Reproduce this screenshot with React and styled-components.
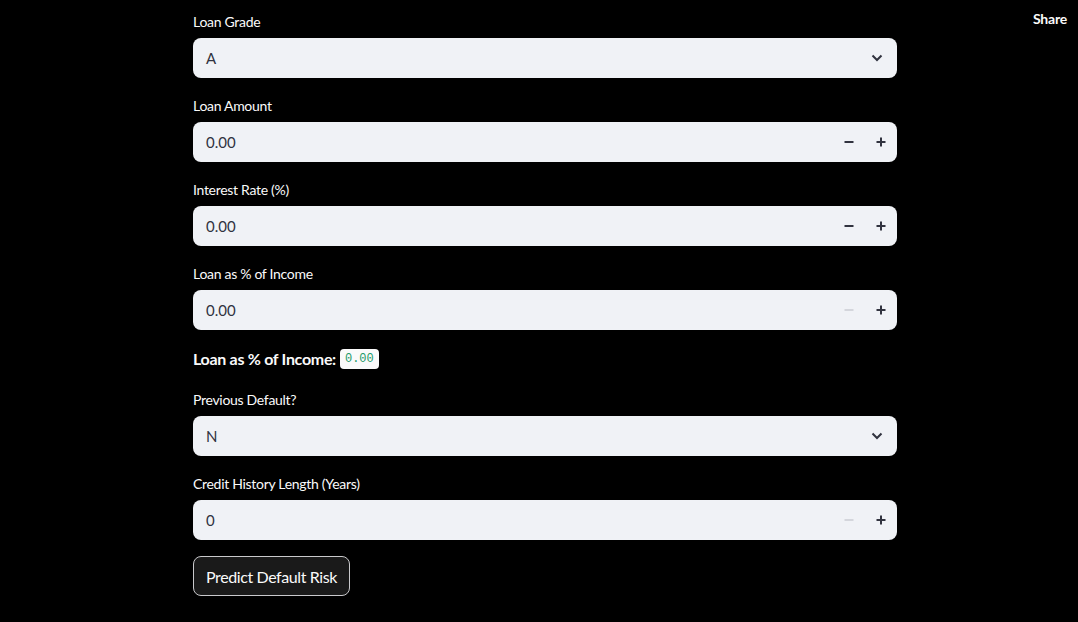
import React from 'react';
import styled, { createGlobalStyle } from 'styled-components';

const GlobalStyle = createGlobalStyle`
  html, body {
    margin: 0;
    padding: 0;
    background: #000;
    font-family: Lato, "Noto Sans", sans-serif;
  }
`;

const Page = styled.div`
  position: relative;
  min-height: 622px;
  background: #000;
  color: #fafafa;
`;

const Header = styled.header`
  position: absolute;
  top: 0;
  right: 0;
  padding: 8px 11px;
`;

const ShareLink = styled.span`
  font-size: 14px;
  font-weight: 700;
  letter-spacing: -0.2px;
  color: #fafafa;
`;

const Main = styled.main`
  width: 704px;
  margin: 0 auto;
  padding: 10px 0 0 12px;
  display: flex;
  flex-direction: column;
  gap: 16px;
`;

const Field = styled.div`
  display: flex;
  flex-direction: column;
`;

const Label = styled.label`
  font-size: 14px;
  line-height: 24px;
  letter-spacing: -0.3px;
  margin-bottom: 4px;
  color: #fafafa;
`;

const Box = styled.div`
  display: flex;
  align-items: center;
  height: 40px;
  background: #f0f2f6;
  border-radius: 8px;
  color: #31333f;
  font-size: 15px;
`;

const Value = styled.span`
  flex: 1;
  padding-left: 13px;
`;

const StepButton = styled.span`
  width: 32px;
  height: 40px;
  display: flex;
  align-items: center;
  justify-content: center;
  color: ${p => (p.disabled ? '#d4d6dc' : '#31333f')};
`;

const Chevron = styled.span`
  width: 40px;
  display: flex;
  align-items: center;
  justify-content: center;
  color: #31333f;
`;

const Markdown = styled.p`
  margin: 0;
  height: 26px;
  font-size: 16px;
  line-height: 24px;
  font-weight: 700;
  letter-spacing: -0.3px;
  display: flex;
  align-items: center;
  gap: 4px;
`;

const Code = styled.code`
  font-family: "Liberation Mono", "DejaVu Sans Mono", monospace;
  font-weight: 400;
  font-size: 12px;
  line-height: 20px;
  letter-spacing: 0;
  padding: 0 5px;
  border-radius: 4px;
  background: #fafafa;
  color: #1f9a6a;
`;

const Button = styled.button`
  align-self: flex-start;
  height: 40px;
  padding: 0 12px;
  background: #1a1a1a;
  border: 1px solid #c9c9cc;
  border-radius: 8px;
  color: #fafafa;
  font-family: inherit;
  font-size: 16px;
  letter-spacing: -0.4px;
`;

const Minus = () => (
  <svg width="10" height="10" viewBox="0 0 10 10">
    <path d="M0.5 5h9" stroke="currentColor" strokeWidth="2" />
  </svg>
);

const Plus = () => (
  <svg width="10" height="10" viewBox="0 0 10 10">
    <path d="M0.5 5h9M5 0.5v9" stroke="currentColor" strokeWidth="2" />
  </svg>
);

const Down = () => (
  <svg width="12" height="8" viewBox="0 0 12 8">
    <path d="M1.5 1.5L6 6l4.5-4.5" stroke="currentColor" strokeWidth="2" fill="none" />
  </svg>
);

const SelectField = ({ label, value }) => (
  <Field>
    <Label>{label}</Label>
    <Box>
      <Value>{value}</Value>
      <Chevron><Down /></Chevron>
    </Box>
  </Field>
);

const NumberField = ({ label, value, minDisabled }) => (
  <Field>
    <Label>{label}</Label>
    <Box>
      <Value>{value}</Value>
      <StepButton disabled={minDisabled}><Minus /></StepButton>
      <StepButton><Plus /></StepButton>
    </Box>
  </Field>
);

export default function App() {
  return (
    <Page>
      <GlobalStyle />
      <Header>
        <ShareLink>Share</ShareLink>
      </Header>
      <Main>
        <SelectField label="Loan Grade" value="A" />
        <NumberField label="Loan Amount" value="0.00" />
        <NumberField label="Interest Rate (%)" value="0.00" />
        <NumberField label="Loan as % of Income" value="0.00" minDisabled />
        <Markdown>
          Loan as % of Income: <Code>0.00</Code>
        </Markdown>
        <SelectField label="Previous Default?" value="N" />
        <NumberField label="Credit History Length (Years)" value="0" minDisabled />
        <Button>Predict Default Risk</Button>
      </Main>
    </Page>
  );
}
